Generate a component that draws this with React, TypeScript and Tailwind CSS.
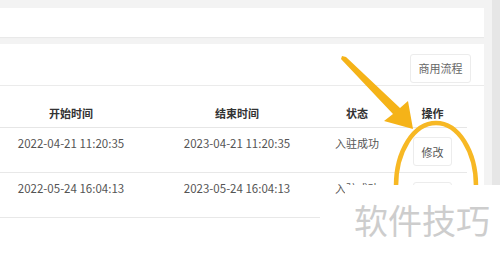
import React from "react";

const rows = [
  { start: "2022-04-21 11:20:35", end: "2023-04-21 11:20:35", status: "入驻成功" },
  { start: "2022-05-24 16:04:13", end: "2023-05-24 16:04:13", status: "入驻成功" },
];

const cols = "grid grid-cols-[142px_190px_50px_85px]";

function Arrow() {
  return (
    <svg className="absolute left-0 top-0 pointer-events-none" width="500" height="261" viewBox="0 0 500 261">
      <ellipse cx="436" cy="186" rx="40" ry="63" fill="none" stroke="#f7b824" strokeWidth="4.5" />
      <polygon
        points="342,56 346,57 400,108 408,101 413,129 384,121 393,114 341,59"
        fill="#f5b318"
      />
    </svg>
  );
}

export default function App() {
  return (
    <div
      className="relative w-[500px] h-[261px] overflow-hidden bg-[#f3f3f3] flex text-[11px]"
      style={{ fontFamily: '"Noto Sans CJK SC", "Noto Sans", sans-serif' }}
    >
      <div className="w-[484px] flex flex-col pt-2">
        <div className="h-[29px] bg-white shadow-[0_1px_1px_rgba(0,0,0,0.04)]" />
        <div className="mt-[7px] flex-1 bg-white">
          <div className="h-[42px] flex items-start justify-end pr-[13px] pt-[10px] border-b border-[#ebebeb]">
            <button className="h-[29px] w-[61px] rounded-[3px] border border-[#ececec] text-[#666] text-[11px]">
              商用流程
            </button>
          </div>
          <div className="w-[467px]">
            <div className={`${cols} h-[42px] border-b border-[#e6e6e6] text-[#333] font-semibold leading-4`}>
              <div className="pt-[19px] text-center">开始时间</div>
              <div className="pt-[19px] text-center">结束时间</div>
              <div className="pt-[19px] text-center">状态</div>
              <div className="pt-[19px] pl-4 text-center">操作</div>
            </div>
            {rows.map((r) => (
              <div key={r.start} className={`${cols} items-start border-b border-[#e8e8e8] text-[#555] leading-4`}>
                <div className="pt-[7px] text-center text-[11.5px]">{r.start}</div>
                <div className="pt-[7px] text-center text-[11.5px]">{r.end}</div>
                <div className="pt-[7px] text-center whitespace-nowrap">{r.status}</div>
                <div className="pt-[9px] pb-[6px] pl-4 flex justify-center">
                  <button className="h-[29px] w-[39px] rounded-[3px] border border-[#ececec] text-[#555] text-[11px]">
                    修改
                  </button>
                </div>
              </div>
            ))}
          </div>
        </div>
      </div>
      <div className="w-2 bg-[#f3f3f3]" />
      <div className="w-2 bg-[#e6e6e6]" />
      <Arrow />
      <div className="absolute left-[345px] top-[185px] right-0 bottom-0 bg-white" />
      <div className="absolute left-[320px] top-[200px] right-0 bottom-0 bg-white" />
      <div className="absolute left-[354px] top-[199px] text-[34px] leading-[42px] text-[#cdcdcd] whitespace-nowrap">
        软件技巧
      </div>
    </div>
  );
}
